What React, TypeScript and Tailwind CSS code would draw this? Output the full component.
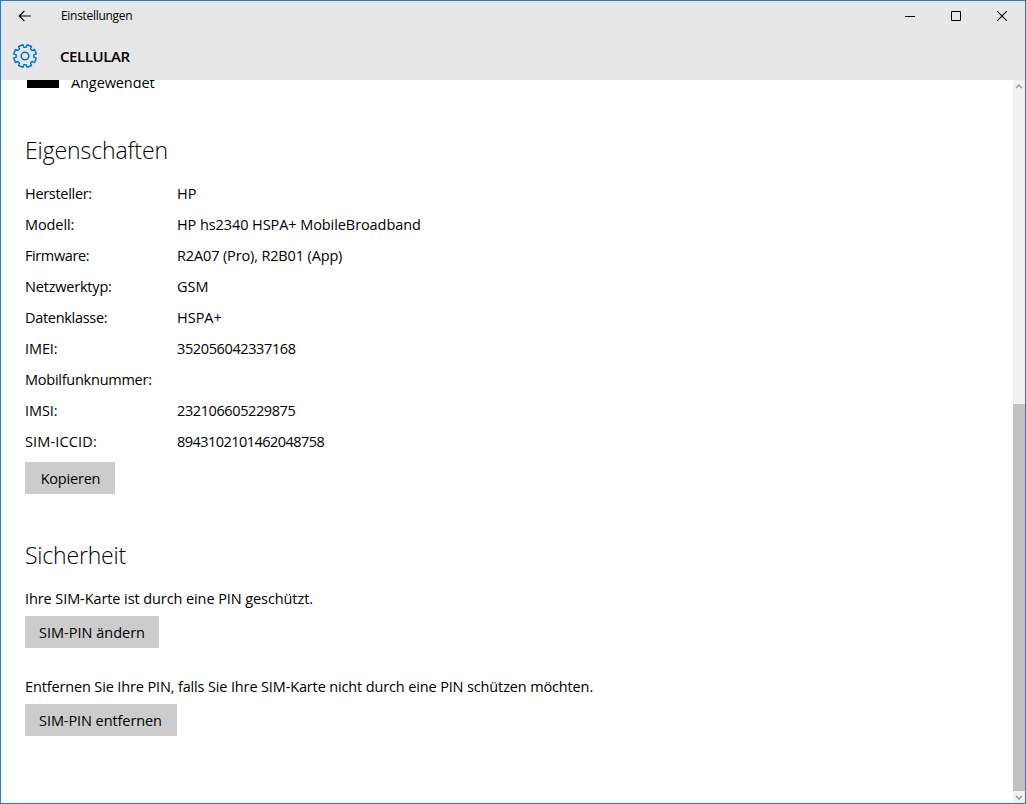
import React from "react";

type Property = { label: string; labelClass: string; value: string; valueClass: string };

const properties: Property[] = [
  { label: "Hersteller:", labelClass: "tracking-[-0.3px]", value: "HP", valueClass: "tracking-normal" },
  { label: "Modell:", labelClass: "tracking-[-0.1px]", value: "HP hs2340 HSPA+ MobileBroadband", valueClass: "tracking-[-0.08px]" },
  { label: "Firmware:", labelClass: "tracking-[-0.4px]", value: "R2A07 (Pro), R2B01 (App)", valueClass: "tracking-[-0.14px]" },
  { label: "Netzwerktyp:", labelClass: "tracking-[-0.2px]", value: "GSM", valueClass: "tracking-normal" },
  { label: "Datenklasse:", labelClass: "tracking-[-0.3px]", value: "HSPA+", valueClass: "tracking-normal" },
  { label: "IMEI:", labelClass: "tracking-[-0.1px]", value: "352056042337168", valueClass: "tracking-[-0.38px]" },
  { label: "Mobilfunknummer:", labelClass: "tracking-[-0.25px]", value: "", valueClass: "tracking-normal" },
  { label: "IMSI:", labelClass: "tracking-[-0.1px]", value: "232106605229875", valueClass: "tracking-[-0.4px]" },
  { label: "SIM-ICCID:", labelClass: "tracking-[0.15px]", value: "8943102101462048758", valueClass: "tracking-[-0.54px]" },
];

/** Outline of a cog around the origin: eight teeth, with a valley on each axis. */
function cogPath(): string {
  const points: string[] = [];
  for (let i = 0; i < 8; i++) {
    const middle = i * 45 + 22.5;
    for (const [offset, radius] of [[-15, 8.9], [-12, 11.5], [12, 11.5], [15, 8.9]]) {
      const angle = ((middle + offset) * Math.PI) / 180;
      points.push(`${(radius * Math.cos(angle)).toFixed(2)} ${(radius * Math.sin(angle)).toFixed(2)}`);
    }
  }
  return `M${points.join("L")}Z`;
}

function TitleBar() {
  return (
    <div className="flex h-[30px] items-center">
      <div className="flex w-[60px] pl-[17px]">
        <svg width="14" height="12" viewBox="0 0 14 12" fill="none" stroke="#000" strokeWidth="1.2">
          <path d="M13 6H1.2M6.4 .8L1.2 6l5.2 5.2" />
        </svg>
      </div>
      <span className="grow text-[12px] leading-4 tracking-[-0.3px]">Einstellungen</span>
      <div className="flex">
        <button className="flex h-[30px] w-[46px] items-center justify-center" aria-label="Minimieren">
          <svg width="10" height="10" shapeRendering="crispEdges"><path d="M0 5h10v1H0z" /></svg>
        </button>
        <button className="flex h-[30px] w-[46px] items-center justify-center" aria-label="Maximieren">
          <svg width="10" height="10" fill="none" stroke="#000"><path d="M.5 .5h9v9h-9z" /></svg>
        </button>
        <button className="flex h-[30px] w-[46px] items-center justify-center" aria-label="Schließen">
          <svg width="10" height="10" stroke="#000" strokeWidth="1.1"><path d="M0 0L10 10M10 0L0 10" /></svg>
        </button>
      </div>
    </div>
  );
}

function Header() {
  return (
    <header className="h-[79px] shrink-0 bg-[#e6e6e6]">
      <TitleBar />
      <div className="flex h-[50px] items-center">
        <div className="w-[59px] pl-[11px]">
          <svg width="26" height="26" viewBox="-13 -13 26 26" fill="none" stroke="#0078d7" strokeWidth="1.5" strokeLinejoin="round">
            <path d={cogPath()} />
            <circle r="3.8" />
          </svg>
        </div>
        <h1 className="text-[15px] font-semibold leading-5 tracking-[-0.4px]">CELLULAR</h1>
      </div>
    </header>
  );
}

function ScrollBar() {
  return (
    <div className="flex w-3 shrink-0 flex-col bg-[#f1f1f1]">
      <div className="flex h-3 items-center justify-center">
        <svg width="8" height="5" fill="none" stroke="#999" strokeWidth="1.5"><path d="M1 4l3-3 3 3" /></svg>
      </div>
      <div className="mt-[312px] h-[387px] bg-[#c1c1c1]" />
      <div className="flex grow items-center justify-center">
        <svg width="8" height="5" fill="none" stroke="#999" strokeWidth="1.5"><path d="M1 1l3 3 3-3" /></svg>
      </div>
    </div>
  );
}

export default function App() {
  return (
    <div className="flex h-[804px] w-[1026px] flex-col overflow-hidden border border-[#1883d7] bg-white font-['Open_Sans','Noto_Sans',sans-serif] text-[14.5px] text-black">
      <Header />
      <div className="flex min-h-0 grow">
        <main className="grow overflow-hidden pl-6">
          <div className="flex h-[14px] items-end overflow-hidden pl-0.5">
            <div className="mb-[6px] h-2 w-8 bg-black" />
            <span className="mb-px ml-3 leading-5 tracking-[-0.1px]">Angewendet</span>
          </div>
          <h2 className="mt-10 h-8 text-[23px] font-light leading-8 tracking-[-0.1px]">Eigenschaften</h2>
          <dl className="mt-3">
            {properties.map((p) => (
              <div key={p.label} className="flex h-[31px] items-center">
                <dt className={`w-[152px] ${p.labelClass}`}>{p.label}</dt>
                <dd className={p.valueClass}>{p.value}</dd>
              </div>
            ))}
          </dl>
          <button className="mt-[5px] flex h-8 w-[90px] items-center justify-center bg-[#ccc] pt-0.5 pl-px tracking-[-0.2px]">Kopieren</button>
          <h2 className="mt-[45px] h-8 text-[23px] font-light leading-8 tracking-[-0.2px]">Sicherheit</h2>
          <p className="mt-[18px] leading-5 tracking-[-0.09px]">Ihre SIM-Karte ist durch eine PIN geschützt.</p>
          <button className="mt-[7px] flex h-8 w-[134px] items-center justify-center bg-[#ccc] pt-0.5">SIM-PIN ändern</button>
          <p className="mt-[29px] leading-5 tracking-[-0.14px]">Entfernen Sie Ihre PIN, falls Sie Ihre SIM-Karte nicht durch eine PIN schützen möchten.</p>
          <button className="mt-[7px] flex h-8 w-[152px] items-center justify-center bg-[#ccc] pt-0.5 pr-px tracking-[-0.08px]">SIM-PIN entfernen</button>
        </main>
        <ScrollBar />
      </div>
    </div>
  );
}
